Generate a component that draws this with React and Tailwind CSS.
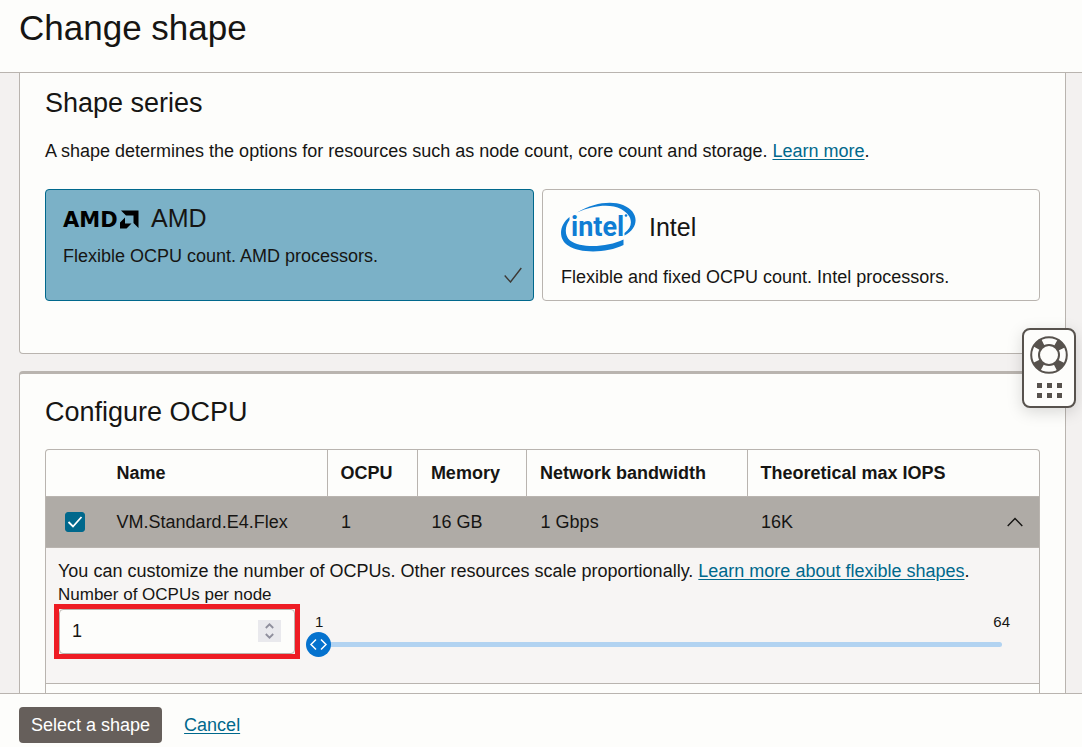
import { useState } from "react";

function AmdLogo() {
  return (
    <svg className="h-6 w-20 shrink-0 overflow-visible" viewBox="0 0 80 24" aria-hidden="true">
      <text x="0" y="21" fontFamily="DejaVu Sans, sans-serif" fontWeight="700" fontSize="21">AMD</text>
      <path d="M58 4.500h17.500v17.500l-5-5V9.500H63z" />
      <path d="M62 11.500L57 16.500V22.500h6.500l5-5h-6.500z" />
    </svg>
  );
}

function IntelLogo() {
  return (
    <svg className="h-[50px] w-[76px] shrink-0" viewBox="0 0 76 50" fill="#0f7dd4" aria-hidden="true">
      <path d="M16 10.500C32 1 50-1.500 62 3C78 9.500 79 25 63.500 33.500V31C73 24 72 13.500 60 7C49 1.500 32 3.500 16 10.500z" />
      <path d="M8.500 15C-2 23-3 37 7 43.500C20 52 46 51 62.500 43V37.500C46 45.500 20 46.500 9 38.500C3 33 4 24 8.500 18z" />
      <text x="10" y="34" fontFamily="Roboto, sans-serif" fontWeight="700" fontSize="27">intel</text>
      <circle cx="65" cy="13.500" r="1.300" />
    </svg>
  );
}

function LifeRing() {
  return (
    <svg className="size-[38px]" viewBox="0 0 38 38" fill="none" stroke="#57524d" aria-hidden="true">
      <circle cx="19" cy="19" r="14" strokeWidth="8" strokeDasharray="8.500 13.491" strokeDashoffset="-6.745" />
      <circle cx="19" cy="19" r="17.800" strokeWidth="2" />
      <circle cx="19" cy="19" r="10" strokeWidth="2" />
    </svg>
  );
}

const link = "text-[#00688c] underline underline-offset-2";
const columns = ["OCPU", "Memory", "Network bandwidth", "Theoretical max IOPS"];
const values = ["1", "16 GB", "1 Gbps", "16K"];

export default function App() {
  const [count, setCount] = useState(1);
  const change = (n) => setCount(Math.min(64, Math.max(1, n)));
  return (
    <div className="flex h-screen flex-col bg-[#fdfdfb] font-['Liberation_Sans',Arial,sans-serif] text-lg leading-6 text-[#161513]">
      <header className="shrink-0 border-b border-[#b9b4af] px-[19px] pt-2 pb-6">
        <h1 className="text-[35px] leading-10">Change shape</h1>
      </header>

      <main className="min-h-0 flex-1 overflow-hidden bg-[#f3f1f0] pr-4 pl-[19px]">
        <section className="rounded-b border border-t-0 border-[#b9b4af] bg-[#fdfdfb] px-[25px] pt-3 pb-[52px]">
          <h2 className="text-[27px] leading-9">Shape series</h2>
          <p className="mt-[18px]">
            A shape determines the options for resources such as node count, core count and storage.{" "}
            <a href="#series" className={link}>Learn more</a>.
          </p>
          <div className="mt-[26px] grid grid-cols-[489fr_498fr] gap-2">
            <button type="button" className="relative flex h-28 flex-col items-start rounded border border-[#00688c] bg-[#7bb1c7] px-[17px] pt-[10px] text-left">
              <span className="flex items-center gap-2">
                <AmdLogo />
                <span className="text-[25px] leading-9">AMD</span>
              </span>
              <span className="mt-2">Flexible OCPU count. AMD processors.</span>
              <svg className="absolute right-[11px] bottom-[17px] h-4 w-[18px]" viewBox="0 0 18 16" fill="none" stroke="#3d3935" strokeWidth="1.400" aria-hidden="true">
                <path d="M.7 8.500L6.500 15 17.300 1" />
              </svg>
            </button>
            <button type="button" className="flex h-28 flex-col items-start rounded border border-[#b9b4af] px-[18px] pt-3 text-left">
              <span className="flex items-center gap-3">
                <IntelLogo />
                <span className="text-[25px] leading-9">Intel</span>
              </span>
              <span className="mt-[13px]">Flexible and fixed OCPU count. Intel processors.</span>
            </button>
          </div>
        </section>

        <section className="mt-[17px] rounded-t border border-t-[3px] border-[#b9b4af] bg-[#fdfdfb] px-[25px] pt-5">
          <h2 className="text-[27px] leading-9">Configure OCPU</h2>
          <div className="mt-[19px] rounded-t border border-b-0 border-[#b9b4af]">
            <table className="w-full table-fixed border-collapse text-left">
              <colgroup>
                <col className="w-[6%]" />
                <col className="w-[22.300%]" />
                <col className="w-[9.100%]" />
                <col className="w-[11%]" />
                <col className="w-[22.200%]" />
                <col />
              </colgroup>
              <thead>
                <tr className="h-[46px] border-b border-[#b9b4af]">
                  <th aria-label="Selected" />
                  <th className="pl-[11px]">Name</th>
                  {columns.map((c) => (
                    <th key={c} className="border-l border-[#b9b4af] pl-[13px] whitespace-nowrap">{c}</th>
                  ))}
                </tr>
              </thead>
              <tbody>
                <tr className="h-[51px] border-b border-[#b9b4af] bg-[#afaba6]">
                  <td className="pl-[19px]">
                    <label className="relative block size-5">
                      <input type="checkbox" defaultChecked aria-label="Select VM.Standard.E4.Flex" className="peer block size-5 appearance-none rounded-[3px] border border-[#00688c] bg-white checked:bg-[#00688c]" />
                      <svg className="pointer-events-none absolute inset-0 hidden size-5 peer-checked:block" viewBox="0 0 20 20" fill="none" stroke="white" strokeWidth="1.800" aria-hidden="true">
                        <path d="M3.500 10L8 14.500 16.500 5" />
                      </svg>
                    </label>
                  </td>
                  <td className="pl-[11px]">VM.Standard.E4.Flex</td>
                  {values.map((v, i) => (
                    <td key={v} className="pl-[14px]">
                      <div className="flex items-center justify-between">
                        {v}
                        {i === 3 && (
                          <button type="button" aria-label="Collapse" className="mr-4">
                            <svg className="h-[10px] w-4" viewBox="0 0 16 10" fill="none" stroke="#161513" strokeWidth="1.400">
                              <path d="M.7 9L8 1.500 15.300 9" />
                            </svg>
                          </button>
                        )}
                      </div>
                    </td>
                  ))}
                </tr>
              </tbody>
            </table>

            <div className="border-b border-[#b9b4af] bg-[#f7f5f4] pt-[11px] pr-[29px] pb-6 pl-2">
              <p className="pl-1">
                You can customize the number of OCPUs. Other resources scale proportionally.{" "}
                <a href="#flexible" className={link}>Learn more about flexible shapes</a>.
              </p>
              <label htmlFor="ocpus" className="block pt-[2px] pl-1 text-[17px] leading-[19px]">Number of OCPUs per node</label>
              <div className="flex items-start gap-[6px]">
                <div className="w-[246px] shrink-0 border-[5px] border-[#ee1c24]">
                  <div className="flex h-[45px] items-center rounded border border-[#b9b4af] bg-[#fdfdfb] pr-[13px] pl-3">
                    <input id="ocpus" type="number" min="1" max="64" value={count} onChange={(e) => change(Number(e.target.value))} className="min-w-0 flex-1 bg-transparent outline-none [appearance:textfield] [&::-webkit-inner-spin-button]:appearance-none" />
                    <div className="flex h-[22px] w-[23px] flex-col items-center justify-center gap-1 bg-[#e9e9ed]">
                      <button type="button" aria-label="Increase" onClick={() => change(count + 1)}>
                        <svg className="block h-[6px] w-[9px]" viewBox="0 0 9 6" fill="none" stroke="#8f8f9d" strokeWidth="1.800"><path d="M.8 5L4.500 1.300 8.200 5" /></svg>
                      </button>
                      <button type="button" aria-label="Decrease" onClick={() => change(count - 1)}>
                        <svg className="block h-[6px] w-[9px]" viewBox="0 0 9 6" fill="none" stroke="#8f8f9d" strokeWidth="1.800"><path d="M.8 1L4.500 4.700 8.200 1" /></svg>
                      </button>
                    </div>
                  </div>
                </div>
                <div className="min-w-0 flex-1 pt-2 text-[15px] leading-5">
                  <div className="flex justify-between pl-[9px]">
                    <span>1</span>
                    <span>64</span>
                  </div>
                  <div className="relative mr-2 flex h-[25px] items-center">
                    <input type="range" min="1" max="64" value={count} onChange={(e) => change(Number(e.target.value))} aria-label="OCPUs per node" className="h-[5px] w-full appearance-none rounded-full bg-[#b2d3f1] [&::-webkit-slider-thumb]:size-[25px] [&::-webkit-slider-thumb]:appearance-none [&::-webkit-slider-thumb]:rounded-full [&::-webkit-slider-thumb]:bg-[#0572ce]" />
                    <div className="pointer-events-none absolute inset-y-0 right-[25px] left-0">
                      <svg className="absolute top-0 size-[25px]" style={{ left: `${((count - 1) / 63) * 100}%` }} viewBox="0 0 25 25" fill="none" stroke="white" strokeWidth="1.500" aria-hidden="true">
                        <path d="M10 7.500l-5 5 5 5M15 7.500l5 5-5 5" />
                      </svg>
                    </div>
                  </div>
                </div>
              </div>
            </div>
            <div className="h-12" />
          </div>
        </section>
      </main>

      <footer className="flex shrink-0 items-center gap-[22px] border-t border-[#b9b4af] bg-[#fdfdfb] px-[19px] pt-[13px] pb-1">
        <button type="button" className="h-9 rounded bg-[#665f5b] px-3 text-white">Select a shape</button>
        <a href="#cancel" className={link}>Cancel</a>
      </footer>

      <aside className="fixed top-[328px] right-[6px] flex h-20 w-[54px] flex-col items-center gap-[9px] rounded-lg border-2 border-[#57524d] bg-[#fdfdfb] pt-[6px] shadow-[0_4px_16px_rgba(0,0,0,0.15)]">
        <button type="button" aria-label="Help"><LifeRing /></button>
        <div className="grid grid-cols-3 gap-[5px]">
          {[0, 1, 2, 3, 4, 5].map((n) => (
            <span key={n} className="size-[5px] bg-[#57524d]" />
          ))}
        </div>
      </aside>
    </div>
  );
}
